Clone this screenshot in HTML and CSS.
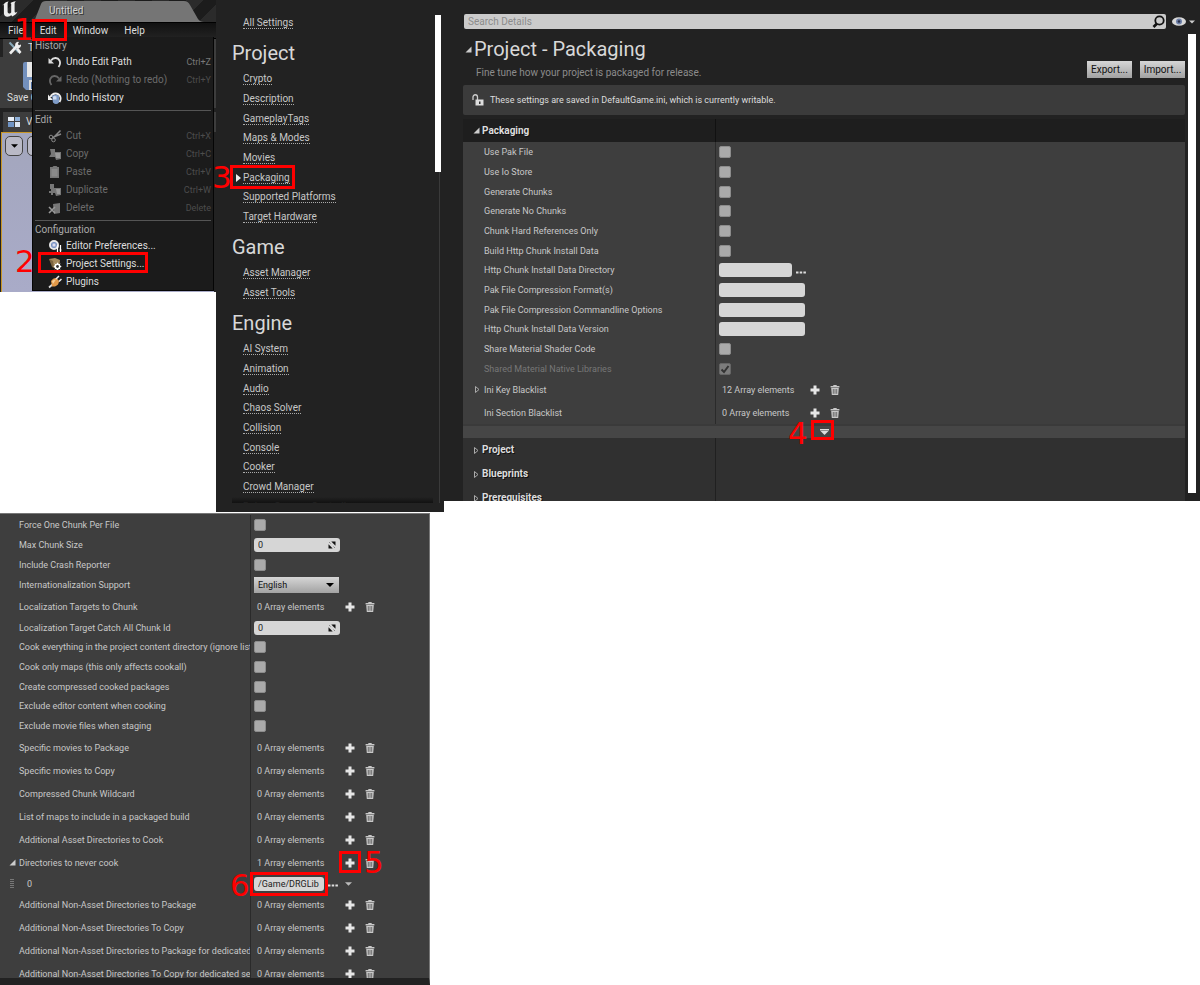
FILE: index.html
```html
<!DOCTYPE html>
<html lang="en">

<head>
  <meta charset="UTF-8">
  <meta name="viewport" content="width=device-width, initial-scale=1.0">
  <title>Project Settings - Packaging</title>
  <link rel="stylesheet" href="styles.css">
</head>

<body>
  <!-- shared icons -->
  <svg class="sprite" aria-hidden="true">
    <symbol id="plus" viewBox="0 0 10 10"><path d="M3.500 .5h3v3h3v3h-3v3h-3v-3h-3v-3h3z" fill="#e6e6e6"/></symbol>
    <symbol id="trash" viewBox="0 0 10 10"><path d="M3.300 0h3.400v1H9.400v1.400H.6V1h2.700z" fill="#c8c8c8"/><path d="M1.200 3h7.600l-.6 7H1.800z" fill="#c8c8c8"/><path d="M3.300 4v4.800M5 4v4.800M6.700 4v4.800" stroke="#555" stroke-width=".8"/></symbol>
    <symbol id="open" viewBox="0 0 7 7"><path d="M6.500 .5v6h-6z" fill="#ccc"/></symbol>
    <symbol id="closed" viewBox="0 0 7 7"><path d="M1.500 .5v6L5 3.500z" fill="none" stroke="#aaa"/></symbol>
    <symbol id="dots" viewBox="0 0 10 3"><path d="M0 .5h2.500v2H0zM3.700 .5h2.500v2H3.700zM7.400 .5h2.500v2H7.400z" fill="#ddd"/></symbol>
    <symbol id="down" viewBox="0 0 8 4"><path d="M0 0h8L4 4z"/></symbol>
    <symbol id="spin" viewBox="0 0 8 8"><path d="M3.300 .5h4.200v4.200zM.5 3.300v4.200h4.200z" fill="#111"/><path d="M1 1l1.500 1.500M5.500 5.500L7 7" stroke="#888"/></symbol>
  </svg>

  <div class="page">
    <div class="top">

      <section class="editor">
        <div class="titlebar">
          <svg class="logo" viewBox="0 0 18 18"><path d="M2.500 4.500C4 2.500 5.500 1.800 7.800 1.500 6.800 2.300 6.600 3 6.600 4.200v7.300c0 1.300.6 2 1.600 2 .9 0 1.600-.5 2-1V4.200c0-.8-.3-1-1-1 1.600-1.200 3-1.700 5.800-2-1 .8-1.400 1.400-1.400 2.600v7.800c0 .9.500 1.200 1.200 1 .6-.1 1-.4 1.700-1-1 2.500-2.700 4-5.400 4.800L10.200 15c-.8 1-2 1.700-3.700 1.700-2.400 0-3.600-1.500-3.600-4V6c0-1-.2-1.500-1-1.300-.6.2-.9.500-1.200.9z" fill="#eee"/></svg>
          <svg class="tab-shape" viewBox="0 0 170 22" preserveAspectRatio="none"><path d="M0 22L7 4Q8 1 12 1H150Q154 1 156 5L164 19Q166 22 170 22z" fill="#757575"/></svg>
          <span class="tab-name">Untitled</span>
        </div>
        <nav class="menubar">
          <button>File</button>
          <button>Edit</button>
          <button>Window</button>
          <button>Help</button>
        </nav>
        <div class="tooltab">
          <svg width="14" height="14" viewBox="0 0 14 14"><path d="M1.500 1.500l9.500 10" stroke="#8ab" stroke-width="2"/><path d="M2 12.500L9 5" stroke="#eee" stroke-width="2.600"/><path d="M8 6a3 3 0 0 1 3-5L9.800 3l1.200 1.300 2-.8A3 3 0 0 1 9 7zM8 8l2-1.500 3.500 4.500-2 2z" fill="#eee"/></svg>
          <span>Toolbar</span>
        </div>
        <div class="toolbar">
          <svg width="28" height="28" viewBox="0 0 28 28"><path d="M0 2q0-2 2-2h26v28H3l-3-3z" fill="#7390bd"/><path d="M4 0h20v15H4z" fill="#e8e8e8"/><path d="M6 18h16v10H6z" fill="#ddd"/><path d="M8 20h4v7H8z" fill="#4a6a9c"/></svg>
          <span>Save Current</span>
        </div>
        <div class="viewtab">
          <svg width="12" height="12" viewBox="0 0 12 12"><path d="M0 1h6v4H0z" fill="#e8eef6"/><path d="M7 1h5v4H7z" fill="#8fb0d8"/><path d="M0 6h6v5H0z" fill="#6f94c4"/><path d="M7 6h5v5H7z" fill="#dce6f2"/></svg>
          <span>Viewport 1</span>
        </div>
        <div class="viewport">
          <button aria-label="Viewport options"><svg width="7" height="4"><use href="#down"/></svg></button>
          <button aria-label="Perspective"></button>
        </div>

        <div class="menu">
          <h3>History</h3>
          <button><svg class="ico" viewBox="0 0 14 14"><path d="M3 5.500C5.500 1.800 10 2.500 11.500 5.500c1 2 .5 4.500-1 6.500" fill="none" stroke="#ddd" stroke-width="1.800"/><path d="M.5 3v5.500H6z" fill="#ddd"/></svg>Undo Edit Path<kbd>Ctrl+Z</kbd></button>
          <button disabled><svg class="ico" viewBox="0 0 14 14"><path d="M11 5.500C8.500 1.800 4 2.500 2.500 5.500c-1 2-.5 4.500 1 6.500" fill="none" stroke="#666" stroke-width="1.800"/><path d="M13.500 3v5.500H8z" fill="#666"/></svg>Redo (Nothing to redo)<kbd>Ctrl+Y</kbd></button>
          <button><svg class="ico" viewBox="0 0 14 14"><path d="M2.500 6C4.500 1.500 10 1.500 12 5c1 2 .8 4-.5 6" fill="none" stroke="#eee" stroke-width="1.800"/><path d="M0 3.500V9h5z" fill="#eee"/><path d="M4 5q4-2.500 7 0v6.500q-3 3-6 0z" fill="#7f9cc8"/><path d="M5 5.500q2-1 3.500 0v3H5z" fill="#cfdcef"/></svg>Undo History</button>
          <hr>
          <h3>Edit</h3>
          <button disabled><svg class="ico" viewBox="0 0 14 14"><path d="M12.500 1.500L5 9M13 5L5.500 8" stroke="#888" stroke-width="1.500"/><circle cx="3" cy="8" r="1.800" fill="none" stroke="#888"/><circle cx="5.500" cy="11" r="1.800" fill="none" stroke="#888"/></svg>Cut<kbd>Ctrl+X</kbd></button>
          <button disabled><svg class="ico" viewBox="0 0 14 14"><path d="M2 2h5v3h6v7l-5 1-1-3H1l2-3z" fill="#777"/><path d="M7 6h5v5H8z" fill="#999"/></svg>Copy<kbd>Ctrl+C</kbd></button>
          <button disabled><svg class="ico" viewBox="0 0 14 14"><path d="M2 2h2.500l1-1h3l1 1H11v11H2z" fill="#777"/><path d="M3.500 4h6v7.500h-6z" fill="#8a8a8a"/></svg>Paste<kbd>Ctrl+V</kbd></button>
          <button disabled><svg class="ico" viewBox="0 0 14 14"><path d="M2 1h4v4h7v7l-5 1-1-3H5v2H3v-2H1V8h2V6H2z" fill="#777"/><path d="M8 6h4v5H9z" fill="#999"/></svg>Duplicate<kbd>Ctrl+W</kbd></button>
          <button disabled><svg class="ico" viewBox="0 0 14 14"><path d="M5 3l7-1v10l-6 1z" fill="#777"/><path d="M1 6l6 6M7 6l-6 6" stroke="#999" stroke-width="1.600"/></svg>Delete<kbd>Delete</kbd></button>
          <hr>
          <h3>Configuration</h3>
          <button><svg class="ico" viewBox="0 0 14 14"><circle cx="6" cy="6" r="4" fill="#6f8cc0" stroke="#e8e8e8" stroke-width="2"/><path d="M4.500 4.500h3v3h-3z" fill="#dde"/><path d="M9.500 6v7M12.500 6v7M8.500 8h2M11.500 11h2" stroke="#fff" stroke-width="1.200"/></svg>Editor Preferences...</button>
          <button><svg class="ico" viewBox="0 0 14 14"><path d="M1 2l6-1 5 2-1 9-5-1z" fill="#a58a5e"/><path d="M1 2l4 2 1 7-2-1z" fill="#7c6440"/><circle cx="9.500" cy="9.500" r="2.300" fill="none" stroke="#fff" stroke-width="1.600"/><path d="M9.500 5.700v7.600M5.700 9.500h7.600M6.800 6.800l5.400 5.400M12.200 6.800l-5.400 5.400" stroke="#fff"/><circle cx="9.500" cy="9.500" r="1.400" fill="#333"/></svg>Project Settings...</button>
          <button><svg class="ico" viewBox="0 0 14 14"><path d="M1 12.500L5 9" stroke="#ddd" stroke-width="1.800"/><path d="M3 6q3-4 6-2.500L11 6q0 4-4 5.500H4z" fill="#e39a4a"/><path d="M4 6q2-2 4-1.500L5 9z" fill="#f7cf98"/><path d="M8 4l3-3M11 6.500l2.500-2.500" stroke="#eee" stroke-width="1.500"/></svg>Plugins</button>
        </div>
      </section>

      <aside class="sidebar">
        <div class="sections">
          <ul>
            <li><a href="#">All Settings</a></li>
          </ul>
          <h2>Project</h2>
          <ul>
            <li><a href="#">Crypto</a></li>
            <li><a href="#">Description</a></li>
            <li><a href="#">GameplayTags</a></li>
            <li><a href="#">Maps &amp; Modes</a></li>
            <li><a href="#">Movies</a></li>
            <li class="current"><a href="#">Packaging</a></li>
            <li><a href="#">Supported Platforms</a></li>
            <li><a href="#">Target Hardware</a></li>
          </ul>
          <h2>Game</h2>
          <ul>
            <li><a href="#">Asset Manager</a></li>
            <li><a href="#">Asset Tools</a></li>
          </ul>
          <h2>Engine</h2>
          <ul>
            <li><a href="#">AI System</a></li>
            <li><a href="#">Animation</a></li>
            <li><a href="#">Audio</a></li>
            <li><a href="#">Chaos Solver</a></li>
            <li><a href="#">Collision</a></li>
            <li><a href="#">Console</a></li>
            <li><a href="#">Cooker</a></li>
            <li><a href="#">Crowd Manager</a></li>
            <li><a href="#">Debug Camera Controller</a></li>
          </ul>
        </div>
        <div class="side-scroll"><div class="thumb"></div></div>
      </aside>

      <main class="details">
        <div class="searchbar">
          <div class="search">
            <input type="text" placeholder="Search Details" aria-label="Search Details">
            <svg width="13" height="13" viewBox="0 0 13 13"><circle cx="7.500" cy="5.500" r="4.200" fill="none" stroke="#111" stroke-width="1.800"/><path d="M5 8.500L1.500 12" stroke="#111" stroke-width="2.600"/></svg>
          </div>
          <button class="view" aria-label="View options">
            <svg width="14" height="9" viewBox="0 0 14 9"><ellipse cx="7" cy="4.500" rx="7" ry="4.300" fill="#d8d8d8"/><circle cx="7" cy="4.500" r="3" fill="#6d7fa8"/><circle cx="7" cy="4.500" r="1.300" fill="#28304a"/></svg>
            <svg width="6" height="4" fill="#ccc"><use href="#down"/></svg>
          </button>
        </div>
        <div class="scroller">
          <div class="content">
            <header class="head">
              <div>
                <h1><svg width="7" height="7"><use href="#open"/></svg>Project - Packaging</h1>
                <p>Fine tune how your project is packaged for release.</p>
              </div>
              <div class="actions">
                <button>Export...</button>
                <button>Import...</button>
              </div>
            </header>
            <div class="notice">
              <svg width="12" height="12" viewBox="0 0 12 12"><path d="M1 6V3a2 2 0 0 1 4.500 0v3" fill="none" stroke="#ccc" stroke-width="1.300"/><path d="M3.500 5.500h8v6h-8z" fill="#ddd"/><path d="M7 7.500h1.500v2.500H7z" fill="#333"/></svg>
              These settings are saved in DefaultGame.ini, which is currently writable.
            </div>

            <div class="category first"><h2><svg width="7" height="7"><use href="#open"/></svg>Packaging</h2></div>
            <div class="rows">
              <div class="row"><div class="name"><label for="pak">Use Pak File</label></div><div class="value"><input type="checkbox" id="pak"></div></div>
              <div class="row"><div class="name"><label for="io">Use Io Store</label></div><div class="value"><input type="checkbox" id="io"></div></div>
              <div class="row"><div class="name"><label for="gen">Generate Chunks</label></div><div class="value"><input type="checkbox" id="gen"></div></div>
              <div class="row"><div class="name"><label for="nogen">Generate No Chunks</label></div><div class="value"><input type="checkbox" id="nogen"></div></div>
              <div class="row"><div class="name"><label for="hard">Chunk Hard References Only</label></div><div class="value"><input type="checkbox" id="hard"></div></div>
              <div class="row"><div class="name"><label for="http">Build Http Chunk Install Data</label></div><div class="value"><input type="checkbox" id="http"></div></div>
              <div class="row"><div class="name"><label for="httpdir">Http Chunk Install Data Directory</label></div><div class="value"><input type="text" class="short" id="httpdir"><button class="more" aria-label="Browse"><svg width="10" height="3"><use href="#dots"/></svg></button></div></div>
              <div class="row"><div class="name"><label for="format">Pak File Compression Format(s)</label></div><div class="value"><input type="text" id="format"></div></div>
              <div class="row"><div class="name"><label for="cmd">Pak File Compression Commandline Options</label></div><div class="value"><input type="text" id="cmd"></div></div>
              <div class="row"><div class="name"><label for="version">Http Chunk Install Data Version</label></div><div class="value"><input type="text" id="version"></div></div>
              <div class="row"><div class="name"><label for="shader">Share Material Shader Code</label></div><div class="value"><input type="checkbox" id="shader"></div></div>
              <div class="row off"><div class="name"><label for="native">Shared Material Native Libraries</label></div><div class="value"><input type="checkbox" id="native" checked disabled><svg class="tick" width="12" height="12" viewBox="0 0 12 12"><path d="M2.500 6.500l2.500 2.500 4.500-6" fill="none" stroke="#333" stroke-width="2"/></svg></div></div>
              <div class="row array"><div class="name"><button class="twirl" aria-label="Expand"><svg width="7" height="7"><use href="#closed"/></svg></button><span>Ini Key Blacklist</span></div><div class="value"><span class="count">12 Array elements</span><button aria-label="Add"><svg width="10" height="10"><use href="#plus"/></svg></button><button aria-label="Clear"><svg width="10" height="10"><use href="#trash"/></svg></button></div></div>
              <div class="row array"><div class="name"><span>Ini Section Blacklist</span></div><div class="value"><span class="count">0 Array elements</span><button aria-label="Add"><svg width="10" height="10"><use href="#plus"/></svg></button><button aria-label="Clear"><svg width="10" height="10"><use href="#trash"/></svg></button></div></div>
            </div>
            <div class="advanced">
              <button aria-label="Show advanced"><svg width="9" height="6" viewBox="0 0 9 6"><path d="M0 0h9v1.500H0zM.5 2h8l-4 4z" fill="#ddd"/></svg></button>
              <div class="mark mark-4"><b>4</b></div>
            </div>
            <div class="category"><h2><svg width="7" height="7"><use href="#closed"/></svg>Project</h2></div>
            <div class="category"><h2><svg width="7" height="7"><use href="#closed"/></svg>Blueprints</h2></div>
            <div class="category"><h2><svg width="7" height="7"><use href="#closed"/></svg>Prerequisites</h2></div>
          </div>
          <div class="main-scroll"><div class="thumb"></div></div>
        </div>
      </main>
    </div>

    <section class="lower">
      <div class="rows">
        <div class="row"><div class="name"><label for="force">Force One Chunk Per File</label></div><div class="value"><input type="checkbox" id="force"></div></div>
        <div class="row"><div class="name"><label for="max">Max Chunk Size</label></div><div class="value"><input type="text" id="max" value="0"><svg class="spin" width="8" height="8"><use href="#spin"/></svg></div></div>
        <div class="row"><div class="name"><label for="crash">Include Crash Reporter</label></div><div class="value"><input type="checkbox" id="crash"></div></div>
        <div class="row combo"><div class="name"><label for="intl">Internationalization Support</label></div><div class="value"><select id="intl"><option>English</option></select><svg class="arrow" width="8" height="4"><use href="#down"/></svg></div></div>
        <div class="row array"><div class="name"><span>Localization Targets to Chunk</span></div><div class="value"><span class="count">0 Array elements</span><button aria-label="Add"><svg width="10" height="10"><use href="#plus"/></svg></button><button aria-label="Clear"><svg width="10" height="10"><use href="#trash"/></svg></button></div></div>
        <div class="row"><div class="name"><label for="catch">Localization Target Catch All Chunk Id</label></div><div class="value"><input type="text" id="catch" value="0"><svg class="spin" width="8" height="8"><use href="#spin"/></svg></div></div>
        <div class="row"><div class="name"><label for="every">Cook everything in the project content directory (ignore list of maps below)</label></div><div class="value"><input type="checkbox" id="every"></div></div>
        <div class="row"><div class="name"><label for="maps">Cook only maps (this only affects cookall)</label></div><div class="value"><input type="checkbox" id="maps"></div></div>
        <div class="row"><div class="name"><label for="comp">Create compressed cooked packages</label></div><div class="value"><input type="checkbox" id="comp"></div></div>
        <div class="row"><div class="name"><label for="exed">Exclude editor content when cooking</label></div><div class="value"><input type="checkbox" id="exed"></div></div>
        <div class="row"><div class="name"><label for="exmov">Exclude movie files when staging</label></div><div class="value"><input type="checkbox" id="exmov"></div></div>
        <div class="row array"><div class="name"><span>Specific movies to Package</span></div><div class="value"><span class="count">0 Array elements</span><button aria-label="Add"><svg width="10" height="10"><use href="#plus"/></svg></button><button aria-label="Clear"><svg width="10" height="10"><use href="#trash"/></svg></button></div></div>
        <div class="row array"><div class="name"><span>Specific movies to Copy</span></div><div class="value"><span class="count">0 Array elements</span><button aria-label="Add"><svg width="10" height="10"><use href="#plus"/></svg></button><button aria-label="Clear"><svg width="10" height="10"><use href="#trash"/></svg></button></div></div>
        <div class="row array"><div class="name"><span>Compressed Chunk Wildcard</span></div><div class="value"><span class="count">0 Array elements</span><button aria-label="Add"><svg width="10" height="10"><use href="#plus"/></svg></button><button aria-label="Clear"><svg width="10" height="10"><use href="#trash"/></svg></button></div></div>
        <div class="row array"><div class="name"><span>List of maps to include in a packaged build</span></div><div class="value"><span class="count">0 Array elements</span><button aria-label="Add"><svg width="10" height="10"><use href="#plus"/></svg></button><button aria-label="Clear"><svg width="10" height="10"><use href="#trash"/></svg></button></div></div>
        <div class="row array"><div class="name"><span>Additional Asset Directories to Cook</span></div><div class="value"><span class="count">0 Array elements</span><button aria-label="Add"><svg width="10" height="10"><use href="#plus"/></svg></button><button aria-label="Clear"><svg width="10" height="10"><use href="#trash"/></svg></button></div></div>
        <div class="row array"><div class="name"><button class="twirl" aria-label="Collapse"><svg width="7" height="7"><use href="#open"/></svg></button><span>Directories to never cook</span></div><div class="value"><span class="count">1 Array elements</span><button aria-label="Add"><svg width="10" height="10"><use href="#plus"/></svg></button><button aria-label="Clear"><svg width="10" height="10"><use href="#trash"/></svg></button></div></div>
        <div class="row item"><div class="name"><span class="grip"></span><label for="never">0</label></div><div class="value"><input type="text" class="short" id="never" value="/Game/DRGLib"><button class="more" aria-label="Browse"><svg width="10" height="3"><use href="#dots"/></svg></button><button aria-label="Options"><svg width="7" height="4" fill="#bbb"><use href="#down"/></svg></button></div></div>
        <div class="row array"><div class="name"><span>Additional Non-Asset Directories to Package</span></div><div class="value"><span class="count">0 Array elements</span><button aria-label="Add"><svg width="10" height="10"><use href="#plus"/></svg></button><button aria-label="Clear"><svg width="10" height="10"><use href="#trash"/></svg></button></div></div>
        <div class="row array"><div class="name"><span>Additional Non-Asset Directories To Copy</span></div><div class="value"><span class="count">0 Array elements</span><button aria-label="Add"><svg width="10" height="10"><use href="#plus"/></svg></button><button aria-label="Clear"><svg width="10" height="10"><use href="#trash"/></svg></button></div></div>
        <div class="row array"><div class="name"><span>Additional Non-Asset Directories to Package for dedicated server only</span></div><div class="value"><span class="count">0 Array elements</span><button aria-label="Add"><svg width="10" height="10"><use href="#plus"/></svg></button><button aria-label="Clear"><svg width="10" height="10"><use href="#trash"/></svg></button></div></div>
        <div class="row array"><div class="name"><span>Additional Non-Asset Directories To Copy for dedicated server only</span></div><div class="value"><span class="count">0 Array elements</span><button aria-label="Add"><svg width="10" height="10"><use href="#plus"/></svg></button><button aria-label="Clear"><svg width="10" height="10"><use href="#trash"/></svg></button></div></div>
      </div>
    </section>

    <!-- numbered steps -->
    <div class="mark mark-1"><b>1</b></div>
    <div class="mark mark-2"><b>2</b></div>
    <div class="mark mark-3"><b>3</b></div>
    <div class="mark mark-5"><b>5</b></div>
    <div class="mark mark-6"><b>6</b></div>
  </div>
</body>

</html>
```

FILE: styles.css
```css
* {
  box-sizing: border-box;
}

body {
  margin: 0;
  background: #fff;
  color: #c8c8c8;
  font-family: Roboto, "Liberation Sans", sans-serif;
  font-size: 9px;
  line-height: 12px;
}

h1, h2, h3, p, ul {
  margin: 0;
  padding: 0;
  font-weight: normal;
}

ul {
  list-style: none;
}

button, input, select {
  margin: 0;
  padding: 0;
  border: 0;
  border-radius: 0;
  background: none;
  color: inherit;
  font: inherit;
}

svg {
  display: block;
  flex: none;
}

.sprite {
  position: absolute;
  width: 0;
  height: 0;
}

.page {
  position: relative;
  display: flex;
  flex-direction: column;
  gap: 1px;
  height: 100vh;
  overflow: hidden;
}

.top {
  display: flex;
  align-items: flex-start;
  flex: none;
}

/* level editor with the open Edit menu */

.editor {
  position: relative;
  width: 216px;
  background: #222;
  font-size: 10px;
  color: #ddd;
}

.titlebar {
  position: relative;
  display: flex;
  height: 22px;
  padding-left: 1px;
  background: repeating-linear-gradient(135deg, #1c1c1c 0 12px, #2b2b2b 12px 24px);
}

.logo {
  width: 18px;
  height: 18px;
}

.tab-shape {
  width: 170px;
  height: 22px;
  margin-left: 15px;
}

.tab-name {
  position: absolute;
  left: 49px;
  top: 5px;
  color: #d0d0d0;
  text-shadow: 1px 1px #333;
}

.menubar {
  display: flex;
  gap: 16px;
  height: 17px;
  padding-left: 8px;
  border: 1px solid #000;
  border-width: 1px 0;
  background: linear-gradient(#111, #222);
}

.tooltab, .viewtab {
  display: flex;
  align-items: center;
  gap: 6px;
  height: 18px;
  margin-left: 3px;
  padding-left: 5px;
  background: #3d3d3d;
  overflow: hidden;
  white-space: nowrap;
}

.toolbar {
  height: 51px;
  padding: 5px 0 0 23px;
  background: #3d3d3d;
  white-space: nowrap;
}

.toolbar span {
  display: block;
  margin: 2px 0 0 -16px;
}

.viewtab {
  height: 20px;
  margin-top: 4px;
}

.viewport {
  display: flex;
  gap: 4px;
  height: 160px;
  margin: 0 2px 0 1px;
  padding: 3px;
  border: 1px solid #c89624;
  border-width: 1px 0 0 1px;
  background: linear-gradient(#a3a6bd, #a9abc8);
}

.viewport button {
  display: grid;
  place-items: center;
  width: 18px;
  height: 20px;
  border: 1px solid #444;
  border-radius: 5px;
  background: #b9b9c6;
}

.menu {
  position: absolute;
  left: 32px;
  top: 37px;
  width: 182px;
  padding: 0 2px;
  border: 1px solid #050505;
  border-width: 0 1px 1px;
  background: #1b1b1b;
}

.menu h3 {
  height: 15px;
  padding-top: 2px;
  color: #aaa;
  font-size: 10px;
  line-height: 13px;
}

.menu button {
  display: flex;
  align-items: center;
  gap: 4px;
  width: 100%;
  height: 18px;
  padding: 2px 0 0 13px;
}

.menu button:disabled {
  color: #6c6c6c;
}

.menu hr {
  margin: 4px 0 0;
  border: 0;
  border-top: 1px solid #555;
}

.ico {
  width: 14px;
  height: 14px;
}

.menu kbd {
  margin-left: auto;
  color: #777;
  font: 9px Roboto, sans-serif;
}

.menu button:disabled kbd {
  color: #4c4c4c;
}

/* settings sections */

.sidebar {
  display: flex;
  justify-content: space-between;
  width: 228px;
  padding: 0 3px 9px 16px;
  background: #222;
}

.sections {
  position: relative;
  width: 201px;
  max-height: 503px;
  padding-top: 13px;
  overflow: hidden;
}

.sections::after {
  content: "";
  position: absolute;
  right: 0;
  bottom: 0;
  left: 0;
  height: 6px;
  background: linear-gradient(transparent, #111);
}

.sections h2 {
  height: 36px;
  padding-top: 5px;
  color: #d8d8d8;
  font-size: 20px;
  line-height: 31px;
}

.sections li {
  display: flex;
  align-items: center;
  height: 20px;
  padding-left: 11px;
  font-size: 10px;
}

/* rows are a little under 20px apart */
.sections li:nth-child(3n), .row:nth-child(3n) {
  height: 19px;
}

.sections a {
  border-bottom: 1px dotted #aaa;
  color: #c8c8c8;
  line-height: 11px;
  text-decoration: none;
}

.sections .current {
  padding-left: 4px;
}

.current::before {
  content: "";
  margin-right: 2px;
  border: 4px solid transparent;
  border-width: 4px 0 4px 5px;
  border-left-color: #eee;
}

.side-scroll {
  width: 6px;
  margin-top: 15px;
  background: linear-gradient(#3a3a3a, #3a3a3a) 4px 0 / 1px 100% no-repeat;
}

.side-scroll .thumb {
  height: 157px;
  background: #fff;
}

/* details panel */

.details {
  display: flex;
  flex: 1;
  flex-direction: column;
  min-width: 0;
  max-height: 501px;
  padding: 14px 4px 0 19px;
  background: #222;
  overflow: hidden;
}

.searchbar {
  display: flex;
  flex: none;
  gap: 6px;
  padding: 0 1px;
}

.search {
  display: flex;
  flex: 1;
  align-items: center;
  height: 15px;
  padding: 0 1px 0 4px;
  border-radius: 2px;
  background: #cbcbcb;
}

.search input {
  flex: 1;
  color: #333;
  font-size: 10px;
  outline: 0;
}

.search input::placeholder {
  color: #8c8c8c;
}

.view {
  display: flex;
  align-items: center;
  gap: 3px;
}

.scroller {
  display: flex;
  gap: 3px;
  min-height: 0;
  padding-top: 5px;
}

.content {
  flex: 1;
  min-width: 0;
}

.head {
  display: flex;
  justify-content: space-between;
  height: 51px;
}

.head h1 {
  display: flex;
  align-items: center;
  gap: 2px;
  padding-left: 2px;
  color: #d8d8d8;
  font-size: 20px;
  line-height: 30px;
}

.head p {
  padding: 3px 0 0 13px;
  color: #8c8c8c;
  font-size: 10px;
}

.actions {
  display: flex;
  gap: 8px;
  padding-top: 27px;
}

.actions button {
  width: 45px;
  height: 17px;
  background: linear-gradient(#d6d6d6, #a2a2a2);
  color: #111;
  font-size: 10px;
}

.notice {
  display: flex;
  align-items: center;
  gap: 6px;
  height: 30px;
  padding: 0 9px;
  border-radius: 2px;
  background: #3b3b3b;
  color: #ddd;
}

.category {
  height: 24px;
  background: #303030;
}

.category h2 {
  display: flex;
  align-items: center;
  gap: 2px;
  width: 253px;
  height: 100%;
  padding-left: 10px;
  border-right: 1px solid #202020;
  color: #ddd;
  font-size: 10px;
  font-weight: bold;
  text-shadow: 1px 1px #111;
}

.category.first {
  margin-top: 4px;
  height: 23px;
  background: #1e1e1e;
}

.category.first h2 {
  border-color: #111;
}

.rows {
  background: #3e3e3e;
}

.row {
  display: flex;
  height: 20px;
}

.row.array {
  height: 23px;
}

.row.combo {
  height: 21px;
}

.name {
  display: flex;
  flex: none;
  align-items: center;
  width: 253px;
  padding-left: 11px;
  border-right: 1px solid #2a2a2a;
  overflow: hidden;
  white-space: nowrap;
}

.name > label:first-child, .name > span:first-child {
  margin-left: 10px;
}

.twirl {
  width: 10px;
}

.value {
  position: relative;
  display: flex;
  align-items: center;
  padding-left: 3px;
}

.off .name {
  color: #777;
}

.value input[type="checkbox"] {
  appearance: none;
  width: 12px;
  height: 12px;
  border: 1px solid #8c8c8c;
  border-radius: 2px;
  background: #aaa;
}

.value input[type="checkbox"]:disabled {
  border-color: #666;
  background: #7c7c7c;
}

.tick {
  position: absolute;
  left: 3px;
}

.value input[type="text"] {
  width: 86px;
  height: 14px;
  padding: 0 4px;
  border-radius: 3px;
  background: #d6d6d6;
  color: #222;
}

.value input.short {
  width: 73px;
}

.more {
  margin: 4px 0 0 4px;
}

.spin {
  position: absolute;
  left: 77px;
}

.arrow {
  position: absolute;
  left: 75px;
}

.value select {
  appearance: none;
  width: 85px;
  height: 16px;
  padding: 0 4px;
  background: linear-gradient(#d6d6d6, #a2a2a2);
  color: #111;
}

.count {
  width: 91px;
  padding-left: 3px;
}

.array .value button + button {
  margin-left: 10px;
}

.advanced {
  position: relative;
  display: grid;
  place-items: center;
  height: 14px;
  border-top: 2px solid #3a3a3a;
  background: #464646;
}

.main-scroll {
  width: 8px;
  padding-bottom: 8px;
}

.main-scroll .thumb {
  height: 100%;
  background: #fff;
}

/* lower part of the same list */

.lower {
  flex: 1;
  width: 430px;
  min-height: 0;
  padding-top: 1px;
  border: 1px solid #777;
  border-left: 0;
  border-bottom: 7px solid #222;
  background: #3e3e3e;
  overflow: hidden;
}

.lower .name {
  width: 251px;
  padding-left: 9px;
}

.lower .name .grip {
  width: 4px;
  height: 11px;
  margin: 0 13px 0 1px;
  background: repeating-linear-gradient(#3e3e3e 0 1px, #777 1px 2px);
}

.item .value input[type="text"] {
  width: 70px;
}

.item .value button + button {
  margin-left: 7px;
}

/* red step markers */

.mark {
  position: absolute;
  border: 3px solid #f00;
}

.mark b {
  position: absolute;
  color: #f00;
  font: 31px/31px "DejaVu Sans", sans-serif;
}

.mark-1 { left: 32px; top: 19px; width: 35px; height: 22px; }
.mark-1 b { left: -21px; top: -8px; }
.mark-2 { left: 38px; top: 252px; width: 110px; height: 21px; }
.mark-2 b { left: -26px; top: -9px; }
.mark-3 { left: 230px; top: 165px; width: 65px; height: 24px; }
.mark-3 b { left: -21px; top: -6px; }
.mark-4 { left: calc(50% - 13px); top: -6px; width: 23px; height: 20px; }
.mark-4 b { left: -26px; top: -5px; }
.mark-5 { left: 339px; top: 851px; width: 22px; height: 22px; }
.mark-5 b { left: 22px; top: -7px; }
.mark-6 { left: 250px; top: 872px; width: 78px; height: 24px; }
.mark-6 b { left: -23px; top: -5px; }
```
